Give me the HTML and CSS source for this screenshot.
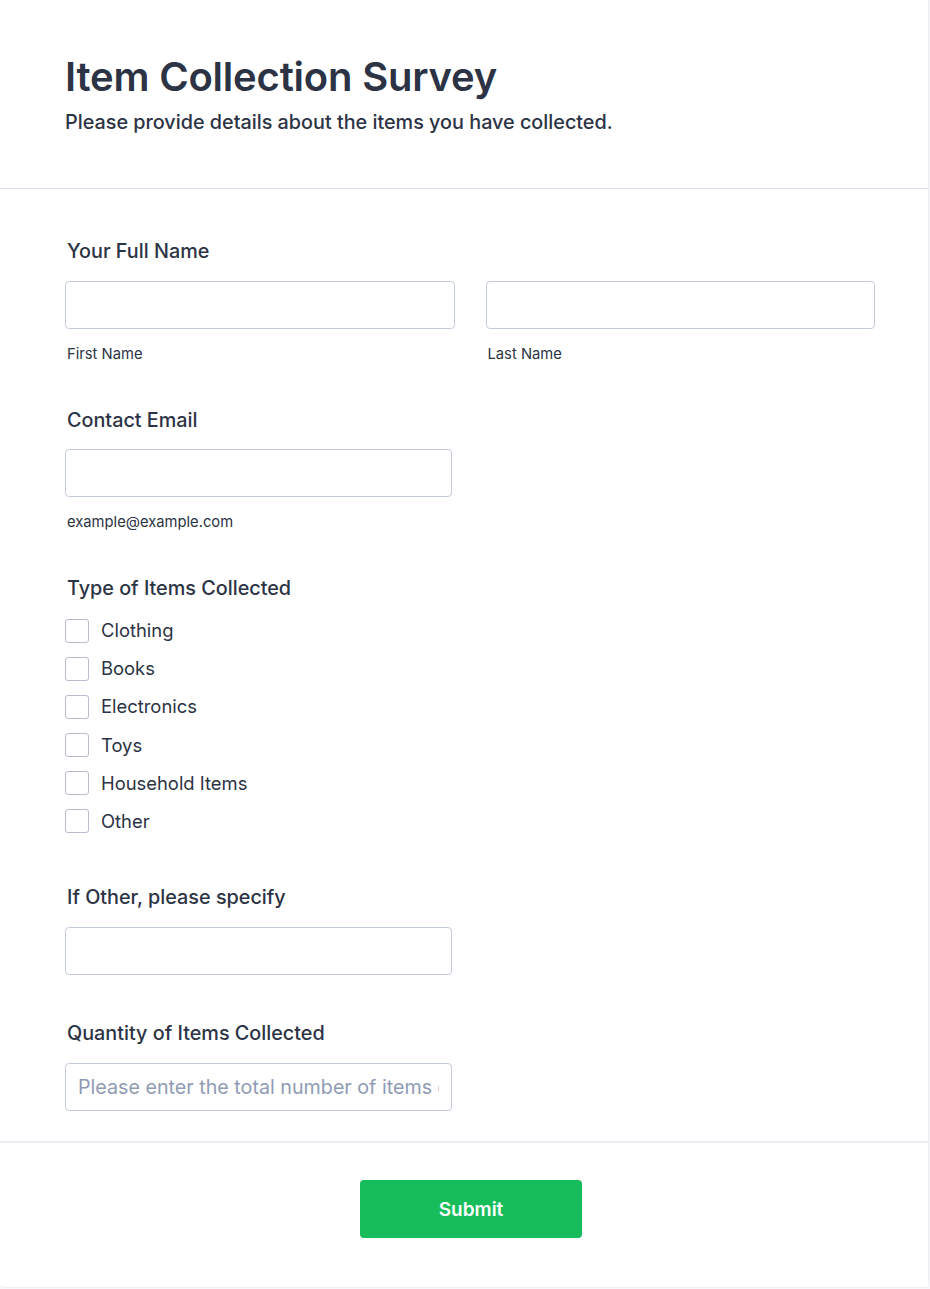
FILE: index.html
```html
<!DOCTYPE html>
<html lang="en">
<head>
<meta charset="utf-8">
<title>Item Collection Survey</title>
<link rel="stylesheet" href="styles.css">
</head>
<body>
<div class="card">
  <header class="header">
    <h1 class="title">Item Collection Survey</h1>
    <p class="subtitle">Please provide details about the items you have collected.</p>
  </header>
  <form class="form">
    <div class="field field-name">
      <label class="label">Your Full Name</label>
      <div class="name-row">
        <div class="name-col">
          <input class="input" type="text">
          <span class="sublabel">First Name</span>
        </div>
        <div class="name-col">
          <input class="input" type="text">
          <span class="sublabel">Last Name</span>
        </div>
      </div>
    </div>
    <div class="field field-email">
      <label class="label">Contact Email</label>
      <input class="input input-half" type="email">
      <span class="sublabel">example@example.com</span>
    </div>
    <div class="field field-types">
      <label class="label">Type of Items Collected</label>
      <div class="checks">
        <label class="check"><span class="box"></span><span>Clothing</span></label>
        <label class="check"><span class="box"></span><span>Books</span></label>
        <label class="check"><span class="box"></span><span>Electronics</span></label>
        <label class="check"><span class="box"></span><span>Toys</span></label>
        <label class="check"><span class="box"></span><span>Household Items</span></label>
        <label class="check"><span class="box"></span><span>Other</span></label>
      </div>
    </div>
    <div class="field field-other">
      <label class="label">If Other, please specify</label>
      <input class="input input-half" type="text">
    </div>
    <div class="field field-qty">
      <label class="label">Quantity of Items Collected</label>
      <input class="input input-half input-qty" type="text" placeholder="Please enter the total number of items collected">
    </div>
  </form>
  <div class="footer">
    <button class="submit" type="button">Submit</button>
  </div>
</div>
</body>
</html>
```

FILE: styles.css
```css
* { box-sizing: border-box; }

html, body {
  margin: 0;
  padding: 0;
  background: #f7f8fc;
}

body {
  font-family: Inter, "Noto Sans", Arial, sans-serif;
  color: #2c3345;
}

.card {
  width: 929px;
  height: 1288px;
  background: #ffffff;
  border-right: 1px solid #eceef4;
  border-bottom: 1px solid #eceef4;
  border-radius: 0 0 4px 4px;
}

.header {
  padding: 53px 65px 0;
  height: 189px;
  border-bottom: 1px solid #dcdcea;
}

.title {
  margin: 0;
  font-size: 40px;
  line-height: 48px;
  font-weight: 600;
  letter-spacing: -0.2px;
  color: #2c3345;
}

.subtitle {
  margin: 8px 0 0;
  font-size: 19.8px;
  line-height: 27px;
  font-weight: 500;
  color: #2c3345;
}

.form {
  display: flex;
  flex-direction: column;
  padding: 0 55px 0 65px;
  height: 954px;
  border-bottom: 2px solid #eaedf2;
}

.field {
  display: flex;
  flex-direction: column;
  align-items: flex-start;
}

.label {
  display: block;
  padding-left: 2px;
  font-size: 19.8px;
  line-height: 27px;
  font-weight: 500;
  color: #2c3345;
  margin-bottom: 16px;
}

.field-email .label { margin-bottom: 15px; }

.field-name { margin-top: 49px; width: 100%; }
.field-email { margin-top: 43px; }
.field-types { margin-top: 43px; }
.field-other { margin-top: 49px; }
.field-qty { margin-top: 45px; }

.name-row {
  display: flex;
  gap: 31px;
  width: 810px;
}

.name-col {
  display: flex;
  flex-direction: column;
  flex: 1;
}

.input {
  display: block;
  width: 100%;
  height: 48px;
  border: 1px solid #c3cad8;
  border-radius: 4px;
  background: #fff;
  padding: 0 12px;
  font-family: inherit;
  font-size: 19.7px;
  color: #2c3345;
  outline: none;
}

.input-half { width: 387px; }

.input::placeholder {
  color: #8f9bb3;
  opacity: 1;
}

.sublabel {
  display: block;
  margin-top: 15px;
  padding-left: 2px;
  font-size: 14.75px;
  line-height: 20px;
  color: #2c3345;
}

.checks {
  display: flex;
  flex-direction: column;
  gap: 11.2px;
  margin-top: -1px;
}

.check {
  display: flex;
  align-items: center;
  gap: 12px;
  font-size: 18.4px;
  line-height: 27px;
  color: #2c3345;
}

.box {
  width: 24px;
  height: 24px;
  border: 1px solid #b8bdc9;
  border-radius: 3px;
  background: #fff;
  flex: none;
}

.footer {
  display: flex;
  justify-content: center;
  padding: 37px 0 0 14px;
}

.submit {
  width: 222px;
  height: 58px;
  border: none;
  border-radius: 4px;
  background: #18bd5b;
  color: #ffffff;
  font-family: inherit;
  font-size: 19px;
  font-weight: 600;
  cursor: pointer;
}
```
